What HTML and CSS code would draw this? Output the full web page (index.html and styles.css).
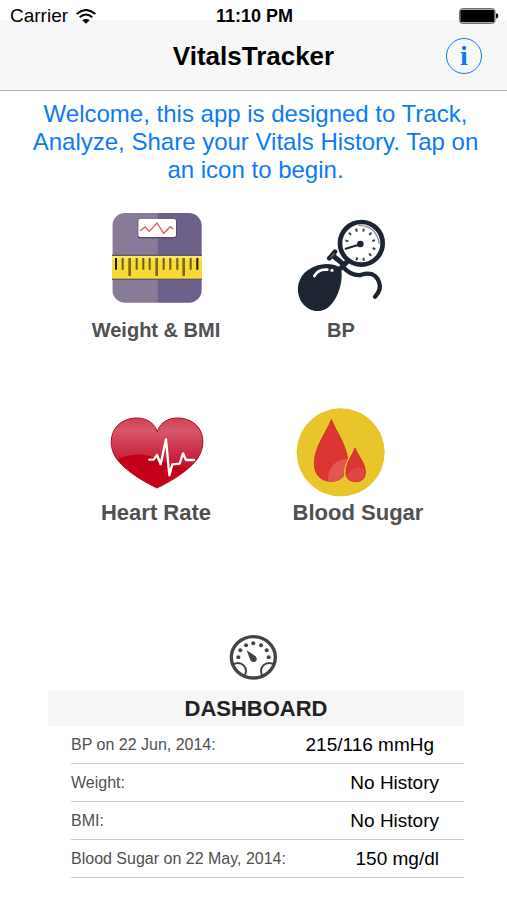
FILE: index.html
```html
<!DOCTYPE html>
<html lang="en">
<head>
  <meta charset="UTF-8">
  <meta name="viewport" content="width=device-width, initial-scale=1.0">
  <title>VitalsTracker</title>
  <link rel="stylesheet" href="styles.css">
</head>
<body>
  <header class="header">
    <div class="status-bar">
      <div class="carrier">
        <span>Carrier</span>
        <svg class="wifi" viewBox="0 0 60 45" aria-hidden="true">
          <path d="M2 15 Q30 -9 58 15" fill="none" stroke="#000" stroke-width="6"/>
          <path d="M11 25 Q30 8 49 25" fill="none" stroke="#000" stroke-width="6"/>
          <path d="M19 34 Q30 24 41 34 L30 44 Z" fill="#000"/>
        </svg>
      </div>
      <span class="time">11:10 PM</span>
      <svg class="battery" viewBox="0 0 120 48" aria-hidden="true">
        <rect x="2" y="2" width="106" height="44" rx="8" fill="#fff" stroke="#555" stroke-width="3"/>
        <rect x="4" y="5" width="102" height="38" rx="5" fill="#000"/>
        <path d="M111 16 Q118 17 118 24 Q118 31 111 32 Z" fill="#000"/>
      </svg>
    </div>
    <div class="nav">
      <h1>VitalsTracker</h1>
      <button type="button" class="info" aria-label="Info">i</button>
    </div>
  </header>

  <main>
    <p class="intro">Welcome, this app is designed to Track, Analyze, Share your Vitals History. Tap on an icon to begin.</p>

    <div class="tiles">
      <button type="button" class="tile">
        <svg viewBox="84 24 288 312" aria-hidden="true">
          <defs>
            <clipPath id="scale"><rect x="97" y="39" width="268" height="269" rx="38"/></clipPath>
          </defs>
          <g clip-path="url(#scale)">
            <rect x="97" y="39" width="136" height="270" fill="#877b98"/>
            <rect x="232" y="39" width="134" height="270" fill="#6d608a"/>
          </g>
          <rect x="173" y="57" width="118" height="58" rx="8" fill="#54486d"/>
          <rect x="175" y="57" width="113" height="54" rx="6" fill="#fff"/>
          <path d="M180 93 L195 81 L208 94 L231 69 L251 100 L271 80 L280 87" fill="none" stroke="#e25a55" stroke-width="4"/>
          <rect x="96" y="164" width="270" height="76" fill="#5f5478"/>
          <rect x="96" y="168" width="270" height="68" fill="#f8da35"/>
          <rect x="96" y="168" width="270" height="10" fill="#fbe763"/>
          <path d="M108 174 V209 M352 174 V209" stroke="#1d1a10" stroke-width="6"/>
          <path d="M128 174 V209 M170 174 V209 M190 174 V209 M209 174 V209 M251 174 V209 M271 174 V209 M292 174 V209 M332 174 V209" stroke="#6b5b1c" stroke-width="6"/>
          <path d="M149 174 V228 M230 174 V228 M311 174 V228" stroke="#7c6a20" stroke-width="8"/>
        </svg>
        <span class="label">Weight &amp; BMI</span>
      </button>

      <button type="button" class="tile">
        <svg viewBox="39 24 288 312" aria-hidden="true">
          <path d="M188 200 C203 216 219 228 242 225 C268 217 287 220 297 246 C305 267 295 280 285 290" fill="none" stroke="#1d2532" stroke-width="13" stroke-linecap="round"/>
          <path d="M206 180 L180 207 M160 168 L187 190" stroke="#1d2532" stroke-width="15"/>
          <path d="M148 175 L165 155" stroke="#1d2532" stroke-width="14" stroke-linecap="round"/>
          <path d="M151 173 L163 160" stroke="#68707b" stroke-width="4"/>
          <path d="M183 204 C158 187 116 186 83 211 C54 232 46 268 61 300 C77 329 108 341 136 328 C172 308 192 245 183 204 Z" fill="#1d2532"/>
          <path d="M103 228 C111 213 124 207 142 209" fill="none" stroke="#fff" stroke-width="8" stroke-linecap="round"/>
          <circle cx="156" cy="211" r="5" fill="#fff"/>
          <circle cx="244" cy="130" r="64" fill="#fff" stroke="#1d2532" stroke-width="14"/>
          <path d="M235 76 Q290 77 298 132" fill="none" stroke="#8a9098" stroke-width="4"/>
          <g stroke="#3e4651" stroke-width="6">
            <path d="M251 86 L250 95 M274 98 L268 105 M285 121 L277 123 M286 148 L278 144 M273 168 L268 160 M252 182 L250 173 M229 181 L232 172 M196 121 L205 124 M207 98 L213 105 M228 86 L231 95"/>
          </g>
          <path d="M241 133 L197 146" stroke="#1d2532" stroke-width="6" stroke-linecap="round"/>
          <circle cx="241" cy="132" r="10" fill="#1d2532"/>
        </svg>
        <span class="label">BP</span>
      </button>

      <button type="button" class="tile tile-large">
        <svg viewBox="84 -27 288 312" aria-hidden="true">
          <defs>
            <linearGradient id="heartTop" x1="0" y1="0" x2="0" y2="1">
              <stop offset="0" stop-color="#cf3d51"/>
              <stop offset="0.3" stop-color="#d7566a"/>
              <stop offset="1" stop-color="#c20f27"/>
            </linearGradient>
            <clipPath id="heart">
              <path d="M232 95 C216 48 158 46 126 66 C92 87 86 130 103 165 C122 203 184 242 231 264 C278 242 340 203 359 165 C376 130 371 87 337 66 C304 46 246 48 232 95 Z"/>
            </clipPath>
          </defs>
          <g clip-path="url(#heart)">
            <rect x="90" y="45" width="285" height="225" fill="#c40018"/>
            <path d="M90 45 H375 V188 C340 213 292 207 250 184 C205 160 158 155 110 180 L90 180 Z" fill="url(#heartTop)"/>
            <path d="M208 179 H221 L231 165 L242 193 L258 118 L268 226 L277 193 L299 191 L309 160 L318 180 H342" fill="none" stroke="#fff" stroke-width="7" stroke-linejoin="round" stroke-linecap="round"/>
          </g>
          <path d="M232 95 C216 48 158 46 126 66 C92 87 86 130 103 165 C122 203 184 242 231 264 C278 242 340 203 359 165 C376 130 371 87 337 66 C304 46 246 48 232 95 Z" fill="none" stroke="#b51429" stroke-width="3"/>
        </svg>
        <span class="label">Heart Rate</span>
      </button>

      <button type="button" class="tile tile-large">
        <svg viewBox="39 -27 288 312" aria-hidden="true">
          <defs>
            <clipPath id="drop"><path d="M154 59 C170 97 201 137 203 185 C204 222 184 244 154 244 C121 244 102 222 103 187 C105 137 140 97 154 59 Z"/></clipPath>
          </defs>
          <circle cx="182" cy="157" r="132" fill="#e9c52c"/>
          <path d="M154 59 C170 97 201 137 203 185 C204 222 184 244 154 244 C121 244 102 222 103 187 C105 137 140 97 154 59 Z" fill="#dd3532" stroke="#c8342a" stroke-width="3"/>
          <circle cx="202" cy="234" r="58" fill="#e35550" clip-path="url(#drop)"/>
          <path d="M225 141 C234 164 257 190 257 216 C257 235 246 246 227 246 C207 246 196 234 196 215 C197 187 217 164 225 141 Z" fill="#dd3532" stroke="#e9c52c" stroke-width="8"/>
          <path d="M225 144 C234 167 256 190 256 216 C256 235 245 245 227 245 C208 245 198 234 198 215 C199 187 217 167 225 144 Z" fill="#dd3532" stroke="#c8342a" stroke-width="3"/>
          <path d="M200 225 Q224 193 253 207 Q258 242 227 244 Q207 243 200 225 Z" fill="#e04744"/>
        </svg>
        <span class="label label-wide">Blood Sugar</span>
      </button>
    </div>

    <svg class="gauge" viewBox="57 42 150 144" aria-hidden="true">
      <defs>
        <clipPath id="dial"><ellipse cx="130" cy="112" rx="68" ry="64"/></clipPath>
      </defs>
      <g fill="none" stroke="#444" clip-path="url(#dial)">
        <circle cx="84" cy="153" r="24" stroke-width="6"/>
        <circle cx="177" cy="153" r="24" stroke-width="6"/>
      </g>
      <ellipse cx="130" cy="112" rx="66" ry="62" fill="none" stroke="#444" stroke-width="10"/>
      <g fill="#444">
        <circle cx="85" cy="112" r="6"/>
        <circle cx="91" cy="91" r="6"/>
        <circle cx="108" cy="76" r="6"/>
        <circle cx="130" cy="70" r="6"/>
        <circle cx="153" cy="76" r="6"/>
        <circle cx="170" cy="91" r="6"/>
        <circle cx="176" cy="112" r="6"/>
        <path d="M110 91 L137 109 Q144 119 136 125 Q126 129 121 121 Z"/>
      </g>
    </svg>

    <section class="dashboard">
      <h2>DASHBOARD</h2>
      <table class="readings">
        <tbody>
          <tr>
            <th scope="row">BP on 22 Jun, 2014:</th>
            <td>215/116 mmHg</td>
          </tr>
          <tr>
            <th scope="row">Weight:</th>
            <td>No History</td>
          </tr>
          <tr>
            <th scope="row">BMI:</th>
            <td>No History</td>
          </tr>
          <tr>
            <th scope="row">Blood Sugar on 22 May, 2014:</th>
            <td>150 mg/dl</td>
          </tr>
        </tbody>
      </table>
    </section>
  </main>
</body>
</html>
```
FILE: styles.css
```css
* { box-sizing: border-box; }
body { margin: 0; background-color: #fff; color: #000; font-family: "Liberation Sans", Arial, sans-serif; }
button { padding: 0; border: none; background: none; font-family: inherit; cursor: pointer; }

/* Header */
.header { padding-bottom: 10px; border-bottom: 1px solid #b2b2b2; background: linear-gradient(#fff 20px, #f7f7f7 20px); }
.status-bar { display: grid; grid-template-columns: 1fr auto 1fr; align-items: center; height: 32px; padding: 0 8px 0 10px; font-size: 19px; }
.carrier { display: flex; align-items: center; gap: 8px; }
.wifi { width: 20px; height: 15px; }
.time { font-size: 18px; font-weight: bold; }
.battery { width: 40px; height: 16px; justify-self: end; }
.nav { display: grid; grid-template-columns: 1fr auto 1fr; align-items: center; height: 48px; padding: 0 25px; }
.nav h1 { grid-column: 2; margin: 0; font-size: 26px; line-height: 32px; }
.info { justify-self: end; width: 36px; height: 36px; border: 1px solid #0b7bf5; border-radius: 50%; color: #0b7bf5; font-family: "Liberation Serif", serif; font-size: 28px; font-weight: bold; line-height: 32px; }

.intro { margin: 0; padding: 9px 22px 0 26px; color: #0b7bf5; font-size: 24px; line-height: 28px; text-align: center; }

/* Icons */
.tiles { display: grid; grid-template-columns: 185px 185px; justify-content: center; row-gap: 49px; padding: 24px 10px 0 0; }
.tile { display: flex; flex-direction: column; align-items: center; gap: 6px; color: #505050; font-size: 20px; }
.tile svg { width: 96px; height: 104px; overflow: visible; }
.tile-large { font-size: 22px; }
.label { font-weight: bold; line-height: 24px; white-space: nowrap; }
.label-wide { padding-left: 34px; }

/* Dashboard */
.gauge { display: block; width: 50px; height: 48px; margin: 109px auto 9px; }
.dashboard { margin: 0 43px 20px 48px; }
.dashboard h2 { margin: 0; background-color: #f6f6f6; color: #222; font-size: 22px; line-height: 35px; text-align: center; }
.readings { width: 100%; padding-left: 23px; border-spacing: 0; }
.readings th, .readings td { height: 38px; padding: 0; border-bottom: 1px solid #ccc; vertical-align: middle; }
.readings th { color: #505050; font-size: 16px; font-weight: normal; text-align: left; }
.readings td { padding-right: 25px; font-size: 19px; text-align: right; }
.readings tr:first-child td { padding-right: 30px; }
```
